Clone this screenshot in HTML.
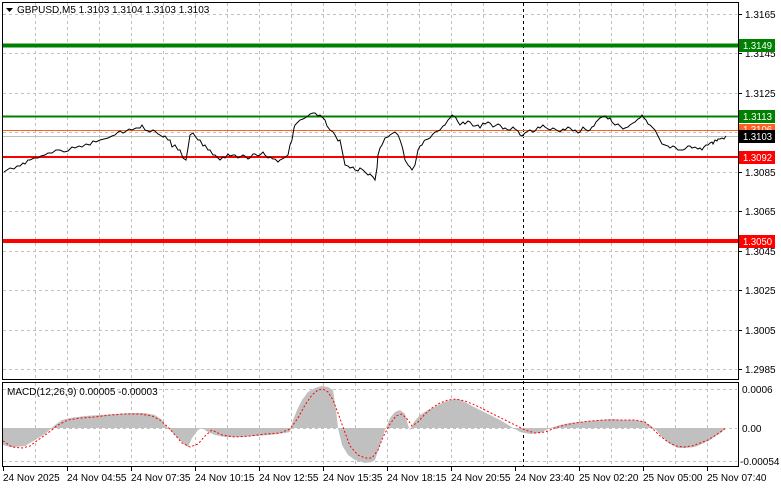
<!DOCTYPE html>
<html><head><meta charset="utf-8"><style>
html,body{margin:0;padding:0;background:#fff;}
svg{display:block;font-family:"Liberation Sans",sans-serif;}
</style></head><body>
<svg width="781" height="489" viewBox="0 0 781 489" xmlns="http://www.w3.org/2000/svg">
<rect width="781" height="489" fill="#fff"/>
<g stroke="#c0c0c0" stroke-dasharray="3,3" stroke-width="1">
<line x1="35.5" y1="3" x2="35.5" y2="379"/><line x1="67.5" y1="3" x2="67.5" y2="379"/><line x1="99.5" y1="3" x2="99.5" y2="379"/><line x1="131.5" y1="3" x2="131.5" y2="379"/><line x1="163.5" y1="3" x2="163.5" y2="379"/><line x1="195.5" y1="3" x2="195.5" y2="379"/><line x1="227.5" y1="3" x2="227.5" y2="379"/><line x1="259.5" y1="3" x2="259.5" y2="379"/><line x1="291.5" y1="3" x2="291.5" y2="379"/><line x1="323.5" y1="3" x2="323.5" y2="379"/><line x1="355.5" y1="3" x2="355.5" y2="379"/><line x1="387.5" y1="3" x2="387.5" y2="379"/><line x1="419.5" y1="3" x2="419.5" y2="379"/><line x1="451.5" y1="3" x2="451.5" y2="379"/><line x1="483.5" y1="3" x2="483.5" y2="379"/><line x1="547.5" y1="3" x2="547.5" y2="379"/><line x1="579.5" y1="3" x2="579.5" y2="379"/><line x1="611.5" y1="3" x2="611.5" y2="379"/><line x1="643.5" y1="3" x2="643.5" y2="379"/><line x1="675.5" y1="3" x2="675.5" y2="379"/><line x1="707.5" y1="3" x2="707.5" y2="379"/>
<line x1="3" y1="14.5" x2="737" y2="14.5"/><line x1="3" y1="53.5" x2="737" y2="53.5"/><line x1="3" y1="93.5" x2="737" y2="93.5"/><line x1="3" y1="132.5" x2="737" y2="132.5"/><line x1="3" y1="172.5" x2="737" y2="172.5"/><line x1="3" y1="211.5" x2="737" y2="211.5"/><line x1="3" y1="251.5" x2="737" y2="251.5"/><line x1="3" y1="290.5" x2="737" y2="290.5"/><line x1="3" y1="330.5" x2="737" y2="330.5"/><line x1="3" y1="369.5" x2="737" y2="369.5"/>
<line x1="35.5" y1="383" x2="35.5" y2="466"/><line x1="67.5" y1="383" x2="67.5" y2="466"/><line x1="99.5" y1="383" x2="99.5" y2="466"/><line x1="131.5" y1="383" x2="131.5" y2="466"/><line x1="163.5" y1="383" x2="163.5" y2="466"/><line x1="195.5" y1="383" x2="195.5" y2="466"/><line x1="227.5" y1="383" x2="227.5" y2="466"/><line x1="259.5" y1="383" x2="259.5" y2="466"/><line x1="291.5" y1="383" x2="291.5" y2="466"/><line x1="323.5" y1="383" x2="323.5" y2="466"/><line x1="355.5" y1="383" x2="355.5" y2="466"/><line x1="387.5" y1="383" x2="387.5" y2="466"/><line x1="419.5" y1="383" x2="419.5" y2="466"/><line x1="451.5" y1="383" x2="451.5" y2="466"/><line x1="483.5" y1="383" x2="483.5" y2="466"/><line x1="547.5" y1="383" x2="547.5" y2="466"/><line x1="579.5" y1="383" x2="579.5" y2="466"/><line x1="611.5" y1="383" x2="611.5" y2="466"/><line x1="643.5" y1="383" x2="643.5" y2="466"/><line x1="675.5" y1="383" x2="675.5" y2="466"/><line x1="707.5" y1="383" x2="707.5" y2="466"/>
<line x1="3" y1="389.5" x2="737" y2="389.5"/><line x1="3" y1="428.5" x2="737" y2="428.5"/><line x1="3" y1="461.5" x2="737" y2="461.5"/>
</g>
<line x1="523.5" y1="3" x2="523.5" y2="466" stroke="#000" stroke-dasharray="3,3"/>
<line x1="2" y1="45.5" x2="738" y2="45.5" stroke="#008000" stroke-width="4"/>
<line x1="2" y1="116.5" x2="738" y2="116.5" stroke="#008000" stroke-width="2"/>
<line x1="2" y1="130.5" x2="738" y2="130.5" stroke="#ff6020" stroke-width="1"/>
<line x1="2" y1="136.5" x2="738" y2="136.5" stroke="#c0c0c0" stroke-width="1"/>
<line x1="2" y1="157" x2="738" y2="157" stroke="#ff0000" stroke-width="2"/>
<line x1="2" y1="241" x2="738" y2="241" stroke="#ff0000" stroke-width="4"/>
<polyline fill="none" stroke="#000" stroke-width="1" points="4,172 7,170 10,168 14,169 17,166 20,166 23,163 25,164 28,160 30,160 34,158 38,158 41,156 45,155 48,153 52,153 56,150 60,150 64,152 68,151 72,147 75,148 79,146 82,147 86,144 90,145 93,141 96,142 100,140 104,139 108,138 112,136 115,135 118,132 120,131 123,133 125,132 129,129 132,130 136,128 140,128 142,125 145,130 148,131 150,132 153,130 155,131 158,134 160,135 163,137 165,136 168,140 170,140 172,147 175,145 178,150 180,150 183,158 186,160 188,148 190,135 193,133 195,136 198,140 200,140 203,146 205,145 208,150 210,150 213,155 215,155 218,158 220,160 223,157 225,158 228,154 230,156 233,155 235,155 238,158 240,157 243,155 245,156 248,159 250,158 253,154 255,154 258,156 260,155 263,152 265,155 268,158 270,157 273,159 275,159 278,162 280,160 284,158 288,155 290,145 292,140 294,128 295,125 298,122 300,120 303,119 305,118 308,116 310,114 313,113 315,113 318,116 320,115 323,118 325,120 327,126 330,130 333,132 335,135 338,141 340,140 342,150 343,155 345,165 348,166 350,168 353,167 355,170 358,171 360,168 363,170 365,172 368,175 370,174 373,177 375,180 377,168 378,155 380,148 382,145 385,138 388,137 390,135 393,133 395,132 398,135 400,140 402,146 403,150 405,160 408,165 410,167 412,170 415,165 418,150 420,146 422,145 424,141 425,140 428,139 430,138 433,134 435,132 438,131 440,130 443,126 445,125 448,120 450,118 452,115 455,117 456,118 458,122 460,125 463,122 465,124 468,121 470,122 473,126 475,126 478,125 480,128 483,123 485,124 488,122 490,123 493,127 495,126 498,124 500,125 503,129 505,128 508,130 510,130 513,127 515,129 518,131 520,135 522,136 525,133 528,131 530,130 533,132 535,131 538,127 540,128 543,125 545,127 548,129 550,130 553,128 555,129 558,131 560,132 563,129 565,130 568,127 570,128 573,131 575,130 578,133 580,132 583,127 585,129 588,131 590,130 592,127 594,126 596,122 598,120 600,118 602,117 605,116 608,119 610,118 612,122 615,125 618,124 620,126 623,129 625,128 628,127 630,125 633,123 635,122 638,119 640,118 642,115 644,118 646,120 648,124 650,125 652,127 655,130 658,136 660,140 662,144 665,145 668,146 670,148 673,146 675,147 678,150 680,150 683,150 685,149 688,146 690,146 692,148 695,147 698,149 700,148 702,150 704,147 706,145 708,145 710,143 712,142 713,144 715,140 717,141 718,139 720,139 722,138 724,139 726,136"/>
<rect x="2.5" y="2.5" width="736" height="377" fill="none" stroke="#000"/>
<rect x="2.5" y="382.5" width="736" height="84" fill="none" stroke="#000"/>
<polygon fill="#c0c0c0" points="3,428 3,445 10,447 15,447 25,446 35,440 45,434 55,425 62,420 70,418 85,416 100,415 115,414 130,413 145,413 155,415 162,420 165,425 170,430 175,435 180,440 185,445 188,447 192,438 198,430 202,428 208,432 215,435 225,437 240,437 255,436 270,435 285,433 290,432 293,420 297,410 302,400 308,392 315,388 322,386 328,387 333,390 336,410 338,428 342,445 348,455 355,460 365,463 372,462 375,460 380,445 385,430 390,418 395,412 400,410 405,414 408,425 410,430 414,422 420,415 428,410 435,407 442,403 450,400 458,399 465,402 472,406 480,410 490,415 500,420 510,426 520,432 530,434 540,433 550,428 560,425 570,423 580,422 590,421 600,420 612,419 622,420 632,420 642,421 650,425 656,430 662,437 670,444 678,448 686,448 695,447 702,444 710,440 716,436 722,432 726,428"/>
<line x1="3" y1="428.5" x2="737" y2="428.5" stroke="#c0c0c0" stroke-dasharray="3,3"/>
<polyline fill="none" stroke="#ff0000" stroke-dasharray="2,2" stroke-width="1" points="3,441 12,447 22,448 30,446 38,440 48,433 58,425 68,420 80,418 95,417 110,415 125,414 140,414 152,416 160,420 168,427 175,435 182,443 190,447 198,444 205,436 212,430 222,435 235,437 250,436 265,434 280,433 290,429 298,418 305,405 312,395 318,390 323,389 328,392 333,400 338,413 344,430 350,446 358,455 365,458 372,458 378,450 383,437 390,424 396,416 402,414 408,420 412,426 418,422 425,414 432,408 440,403 448,400 456,399 465,401 475,405 485,410 495,415 505,420 515,425 525,430 535,433 545,432 555,428 565,425 575,423 590,421 605,420 620,420 635,420 645,422 652,428 660,436 668,442 676,446 684,447 692,446 700,443 708,440 716,435 726,428"/>
<path d="M6 8 L13 8 L9.5 12 Z" fill="#000"/>
<text x="17" y="13" font-size="10" fill="#000">GBPUSD,M5  1.3103 1.3104 1.3103 1.3103</text>
<text x="7" y="395" font-size="10" fill="#000">MACD(12,26,9) 0.00005 -0.00003</text>
<g font-size="10" fill="#000">
<line x1="738" y1="14.5" x2="742" y2="14.5" stroke="#000"/><text x="745" y="18">1.3165</text>
<line x1="738" y1="53.5" x2="742" y2="53.5" stroke="#000"/><text x="745" y="57">1.3145</text>
<line x1="738" y1="93.5" x2="742" y2="93.5" stroke="#000"/><text x="745" y="97">1.3125</text>
<line x1="738" y1="172.5" x2="742" y2="172.5" stroke="#000"/><text x="745" y="176">1.3085</text>
<line x1="738" y1="211.5" x2="742" y2="211.5" stroke="#000"/><text x="745" y="215">1.3065</text>
<line x1="738" y1="251.5" x2="742" y2="251.5" stroke="#000"/><text x="745" y="255">1.3045</text>
<line x1="738" y1="290.5" x2="742" y2="290.5" stroke="#000"/><text x="745" y="294">1.3025</text>
<line x1="738" y1="330.5" x2="742" y2="330.5" stroke="#000"/><text x="745" y="334">1.3005</text>
<line x1="738" y1="369.5" x2="742" y2="369.5" stroke="#000"/><text x="745" y="373">1.2985</text>
<text x="742" y="393">0.0006</text>
<text x="742" y="432">0.00</text>
<text x="740" y="465">-0.00054</text>
</g>
<g font-size="10" fill="#fff">
<rect x="739" y="39" width="36" height="13" fill="#008000"/><text x="743" y="49" textLength="29" lengthAdjust="spacingAndGlyphs">1.3149</text>
<rect x="739" y="110" width="36" height="13" fill="#008000"/><text x="743" y="120" textLength="29" lengthAdjust="spacingAndGlyphs">1.3113</text>
<rect x="739" y="124" width="36" height="8" fill="#ff6020"/><text x="743" y="133" textLength="29" lengthAdjust="spacingAndGlyphs">1.3106</text>
<rect x="739" y="130" width="36" height="13" fill="#000"/><text x="743" y="140" textLength="29" lengthAdjust="spacingAndGlyphs">1.3103</text>
<rect x="739" y="151" width="36" height="13" fill="#ff0000"/><text x="743" y="161" textLength="29" lengthAdjust="spacingAndGlyphs">1.3092</text>
<rect x="739" y="235" width="36" height="13" fill="#ff0000"/><text x="743" y="245" textLength="29" lengthAdjust="spacingAndGlyphs">1.3050</text>
</g>
<g font-size="10" fill="#000">
<text x="3" y="481">24 Nov 2025</text>
<text x="67" y="481">24 Nov 04:55</text>
<text x="131" y="481">24 Nov 07:35</text>
<text x="195" y="481">24 Nov 10:15</text>
<text x="259" y="481">24 Nov 12:55</text>
<text x="323" y="481">24 Nov 15:35</text>
<text x="387" y="481">24 Nov 18:15</text>
<text x="451" y="481">24 Nov 20:55</text>
<text x="515" y="481">24 Nov 23:40</text>
<text x="579" y="481">25 Nov 02:20</text>
<text x="643" y="481">25 Nov 05:00</text>
<text x="707" y="481">25 Nov 07:40</text>
</g>
<g stroke="#000"><line x1="3.5" y1="467" x2="3.5" y2="471"/><line x1="67.5" y1="467" x2="67.5" y2="471"/><line x1="131.5" y1="467" x2="131.5" y2="471"/><line x1="195.5" y1="467" x2="195.5" y2="471"/><line x1="259.5" y1="467" x2="259.5" y2="471"/><line x1="323.5" y1="467" x2="323.5" y2="471"/><line x1="387.5" y1="467" x2="387.5" y2="471"/><line x1="451.5" y1="467" x2="451.5" y2="471"/><line x1="515.5" y1="467" x2="515.5" y2="471"/><line x1="579.5" y1="467" x2="579.5" y2="471"/><line x1="643.5" y1="467" x2="643.5" y2="471"/><line x1="707.5" y1="467" x2="707.5" y2="471"/></g>
</svg>
</body></html>
